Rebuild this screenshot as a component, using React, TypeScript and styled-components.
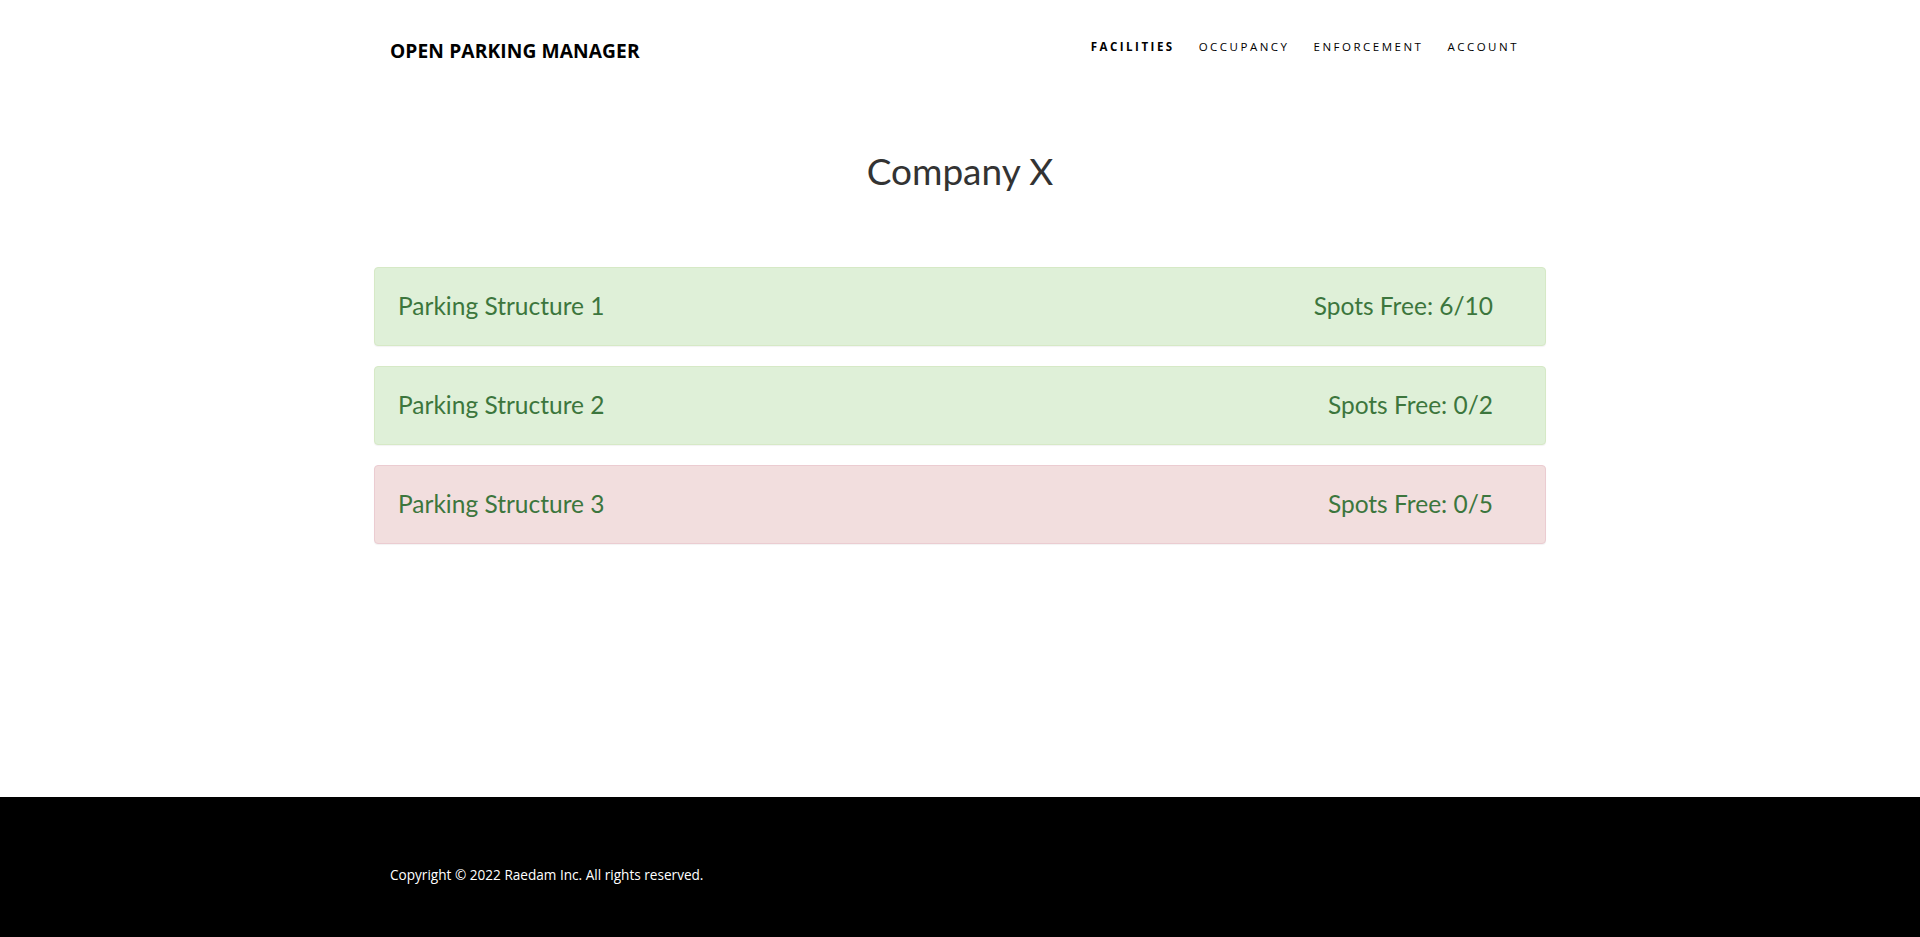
import React from "react";
import styled, { createGlobalStyle } from "styled-components";

const GlobalStyle = createGlobalStyle`
  html, body { margin: 0; padding: 0; background: #fff; }
  * { box-sizing: border-box; }
`;

const Page = styled.div`
  min-height: 100vh;
  display: flex;
  flex-direction: column;
`;

const Container = styled.div`
  width: 1172px;
  margin: 0 auto;
`;

const Header = styled.header`
  height: 100px;
`;

const HeaderInner = styled(Container)`
  display: flex;
  align-items: center;
  justify-content: space-between;
  padding: 0 15px 0 16px;
  height: 100px;
`;

const Brand = styled.a`
  font-family: "Open Sans", sans-serif;
  font-weight: 700;
  font-size: 19.2px;
  color: #000;
  text-decoration: none;
  letter-spacing: 0.1px;
  margin-top: 1px;
`;

const Nav = styled.nav`
  display: flex;
  gap: 24px;
  margin-right: 12px;
  margin-top: -7px;
`;

const NavLink = styled.a<{ $active?: boolean }>`
  font-family: "Open Sans", sans-serif;
  font-size: 11.5px;
  font-weight: ${(p) => (p.$active ? 700 : 500)};
  letter-spacing: 2.5px;
  color: #000;
  text-decoration: none;
  text-transform: uppercase;
`;

const Main = styled.main`
  flex: 1;
`;

const Title = styled.h1`
  margin: 46px 0 0;
  text-align: center;
  font-family: "Lato", sans-serif;
  font-weight: 400;
  font-size: 37px;
  color: #333;
  line-height: 50px;
`;

const CardList = styled(Container)`
  display: flex;
  flex-direction: column;
  gap: 20px;
  margin-top: 71px;
`;

const Card = styled.div<{ $full?: boolean }>`
  height: 79px;
  display: flex;
  align-items: center;
  justify-content: space-between;
  padding: 0 52px 2px 23px;
  border-radius: 4px;
  border: 1px solid ${(p) => (p.$full ? "#ebccd1" : "#d6e9c6")};
  background: ${(p) => (p.$full ? "#f2dede" : "#dff0d8")};
  box-shadow: 0 1px 1px rgba(0, 0, 0, 0.05);
  font-family: "Lato", sans-serif;
  font-size: 24.5px;
  color: #3c763d;
`;

const Footer = styled.footer`
  background: #000;
  height: 140px;
`;

const FooterInner = styled(Container)`
  padding: 68px 15px 0 16px;
  font-family: "Open Sans", sans-serif;
  font-size: 13.6px;
  color: #fff;
`;

const structures = [
  { name: "Parking Structure 1", free: 6, total: 10, full: false },
  { name: "Parking Structure 2", free: 0, total: 2, full: false },
  { name: "Parking Structure 3", free: 0, total: 5, full: true },
];

export default function App() {
  return (
    <>
      <GlobalStyle />
      <Page>
        <Header>
          <HeaderInner>
            <Brand href="#">OPEN PARKING MANAGER</Brand>
            <Nav>
              <NavLink href="#" $active>Facilities</NavLink>
              <NavLink href="#">Occupancy</NavLink>
              <NavLink href="#">Enforcement</NavLink>
              <NavLink href="#">Account</NavLink>
            </Nav>
          </HeaderInner>
        </Header>
        <Main>
          <Title>Company X</Title>
          <CardList>
            {structures.map((s) => (
              <Card key={s.name} $full={s.full}>
                <span>{s.name}</span>
                <span>
                  Spots Free: {s.free}/{s.total}
                </span>
              </Card>
            ))}
          </CardList>
        </Main>
        <Footer>
          <FooterInner>Copyright © 2022 Raedam Inc. All rights reserved.</FooterInner>
        </Footer>
      </Page>
    </>
  );
}
